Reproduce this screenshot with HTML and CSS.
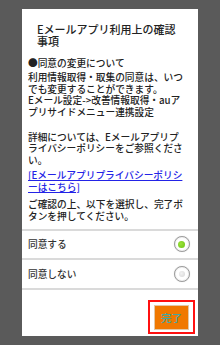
FILE: index.html
```html
<!DOCTYPE html>
<html lang="ja">
<head>
<meta charset="utf-8">
<link rel="stylesheet" href="styles.css">
</head>
<body>
<div class="card">
  <h1 class="title">Eメールアプリ利用上の確認<br>事項</h1>
  <p class="txt lead">●同意の変更について</p>
  <p class="txt p1">利用情報取得・取集の同意は、いつ<br>でも変更することができます。<br>Eメール設定-&gt;改善情報取得・auア<br>プリサイドメニュー連携設定</p>
  <p class="txt p2">詳細については、Eメールアプリプ<br>ライバシーポリシーをご参照くださ<br>い。</p>
  <p class="txt p3"><a class="link" href="#">[Eメールアプリプライバシーポリシ<br>ーはこちら]</a></p>
  <p class="txt p4">ご確認の上、以下を選択し、完了ボ<br>タンを押してください。</p>
  <div class="options">
    <div class="row"><span class="label">同意する</span><span class="radio on"></span></div>
    <div class="row"><span class="label">同意しない</span><span class="radio"></span></div>
  </div>
  <div class="actions">
    <div class="focus"><span class="btn">完了</span></div>
  </div>
</div>
</body>
</html>
```
FILE: styles.css
```css
html, body {
  margin: 0;
  padding: 0;
}
body {
  background: #5a5a5a;
  width: 220px;
  height: 345px;
  overflow: hidden;
  font-family: "Noto Sans CJK JP", "Noto Sans", sans-serif;
  color: #222;
}
.card {
  margin: 9px 0 0 22px;
  width: 176px;
  height: 327px;
  background: #fff;
  display: flex;
  flex-direction: column;
}
.title {
  margin: 0;
  padding: 13.5px 0 0 15px;
  font-size: 11px;
  line-height: 12px;
  font-weight: 500;
  white-space: nowrap;
  color: #222;
}
.txt {
  margin: 0;
  padding-left: 6px;
  font-size: 9.7px;
  line-height: 11.5px;
  font-weight: 500;
  white-space: nowrap;
  color: #222;
}
.lead {
  margin-top: 11.75px;
}
.p1 {
  margin-top: 2.65px;
}
.p2 {
  margin-top: 13.35px;
}
.p3 {
  margin-top: 4px;
}
.link {
  color: #2323e6;
  text-decoration: underline;
}
.p4 {
  margin-top: 6px;
}
.options {
  margin-top: 6.5px;
  border-top: 2px solid #dadada;
}
.row {
  height: 27.5px;
  border-bottom: 2px solid #dadada;
  display: flex;
  align-items: center;
  justify-content: space-between;
  padding: 0 8.5px 0 6px;
}
.label {
  font-size: 9.7px;
  font-weight: 500;
  color: #333;
}
.radio {
  width: 14px;
  height: 14px;
  border-radius: 50%;
  border: 1.5px solid #9c9c9c;
  background: #fff;
  box-shadow: inset 0 0 0 1px #f2f2f2, 0 0 1px #ccc;
  display: flex;
  align-items: center;
  justify-content: center;
}
.radio::after {
  content: "";
  width: 6px;
  height: 6px;
  border-radius: 50%;
  background: radial-gradient(circle at 40% 40%, #f2f2f2, #d6d6d6);
}
.radio.on::after {
  width: 7px;
  height: 7px;
  background: radial-gradient(circle at 40% 40%, #9be23a, #6cc414);
}
.actions {
  display: flex;
  justify-content: flex-end;
  padding: 10.5px 3px 0 0;
}
.focus {
  border: 2px solid #ff1010;
  padding: 3px 4px 2px 4px;
  box-sizing: border-box;
  width: 47px;
  height: 34px;
}
.btn {
  display: flex;
  align-items: center;
  justify-content: center;
  width: 100%;
  height: 100%;
  box-sizing: border-box;
  background: #f07800;
  border: 1px solid #e2c8a8;
  color: #3fa8a4;
  font-size: 10.5px;
  font-weight: 500;
}
```
